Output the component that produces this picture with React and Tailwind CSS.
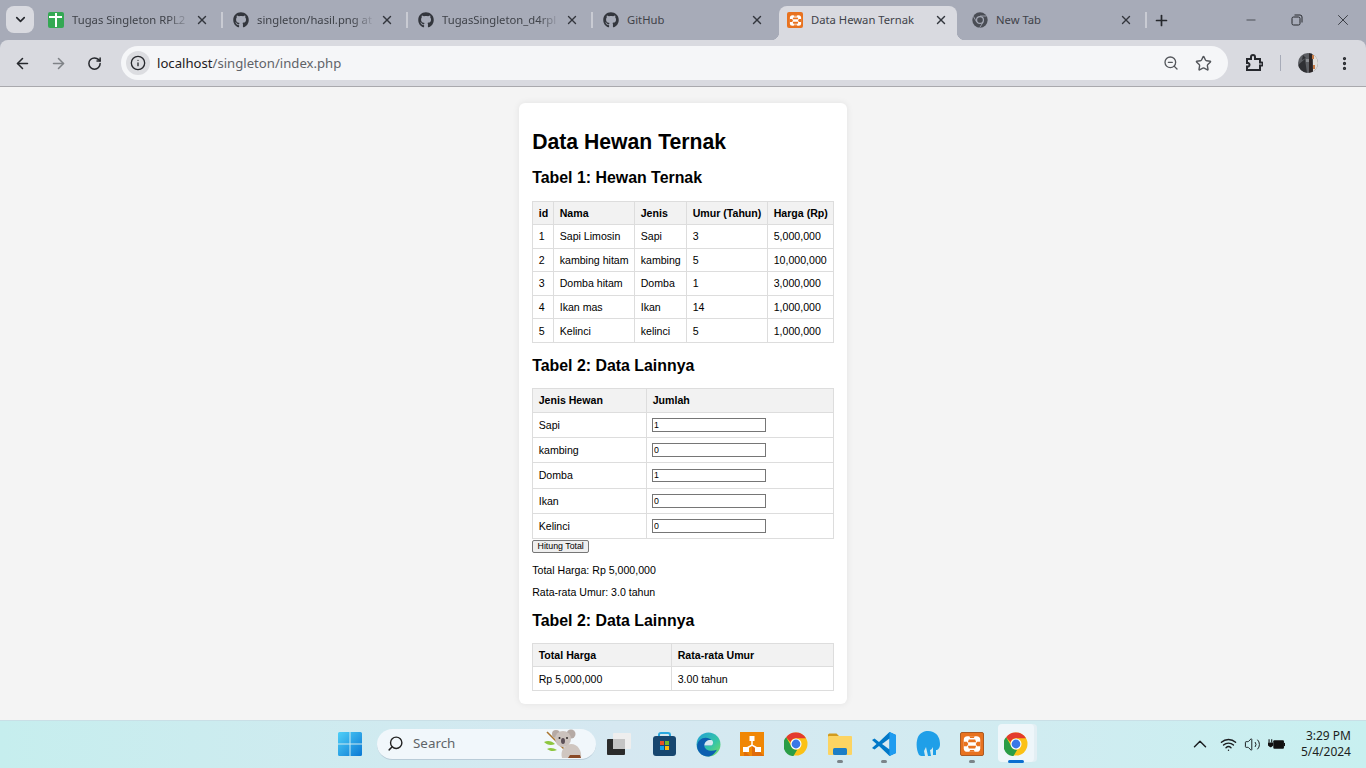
import React from 'react';
import { ArrowLeft, ArrowRight, RotateCw, Info, ZoomOut, Star, MoreVertical, X, Plus, Minus, ChevronDown, ChevronUp, Search, Wifi, Volume2 } from 'lucide-react';
import { FaGithub } from 'react-icons/fa';

const hewan = [
  [1, 'Sapi Limosin', 'Sapi', 3, '5,000,000'],
  [2, 'kambing hitam', 'kambing', 5, '10,000,000'],
  [3, 'Domba hitam', 'Domba', 1, '3,000,000'],
  [4, 'Ikan mas', 'Ikan', 14, '1,000,000'],
  [5, 'Kelinci', 'kelinci', 5, '1,000,000'],
];

const jumlah = [['Sapi', 1], ['kambing', 0], ['Domba', 1], ['Ikan', 0], ['Kelinci', 0]];

const Th = ({ children, className = '' }) => (
  <th className={`whitespace-nowrap border border-[#ddd] bg-[#f2f2f2] px-[5.5px] py-[5.28px] text-left font-bold ${className}`}>{children}</th>
);
const Td = ({ children }) => <td className="whitespace-nowrap border border-[#ddd] px-[5.5px] py-[5.28px] text-left">{children}</td>;

const ChromeLogo = ({ size = 24 }) => (
  <svg width={size} height={size} viewBox="0 0 48 48">
    <circle cx="24" cy="24" r="23" fill="#fbc116" />
    <path d="M24 1a23 23 0 0 1 19.9 11.5H24a11.5 11.5 0 0 0-10.9 7.8L4.200 10.400A23 23 0 0 1 24 1z" fill="#e33b2e" />
    <path d="M4.200 10.400l10 17.300a11.500 11.500 0 0 0 12.200 7.600l-7.700 13.100A23 23 0 0 1 4.200 10.400z" fill="#2a9d46" />
    <circle cx="24" cy="24" r="11" fill="#fff" />
    <circle cx="24" cy="24" r="8.800" fill="#3b78e7" />
  </svg>
);

const GreyChrome = () => (
  <svg width="16" height="16" viewBox="0 0 48 48">
    <circle cx="24" cy="24" r="23" fill="#4a4d55" />
    <circle cx="24" cy="24" r="12" fill="#a7abb8" />
    <circle cx="24" cy="24" r="8.500" fill="#4a4d55" />
    <path d="M24 12h19M14 30L4 13M33 31l-10 16" stroke="#a7abb8" strokeWidth="2.500" />
  </svg>
);

const SheetsIcon = () => (
  <div className="relative h-4 w-4 rounded-[2px] bg-[#34a853]">
    <div className="absolute left-[1px] right-[2px] top-[4px] h-[2px] bg-white" />
    <div className="absolute bottom-[1px] left-[7px] top-[1px] w-[2px] bg-white" />
  </div>
);

const XamppGlyph = ({ size }) => (
  <svg width={size} height={size} viewBox="0 0 24 24">
    <rect x="3" y="3.500" width="18" height="17" rx="4" fill="#fff" />
    <path d="M3 9.500h3.500l1.500 2.500-1.500 2.500H3zM21 9.500h-3.500L16 12l1.500 2.500H21zM9 3.500h6L14 5.500h-4zM9 20.500h6L14 18.500h-4z" fill="#e8721f" />
    <path d="M8.500 7h7l1 3h-9zM7.500 14h9l-1 3h-7z" fill="#e8721f" />
  </svg>
);

const Tab = ({ icon, title, active, separator, fade }) => (
  <div className={`relative flex h-[34px] shrink-0 items-center pb-[6px] pl-2 ${active ? 'mr-[7px] w-[178px] rounded-t-[8px] bg-[#d9dae0]' : 'w-[185px]'}`}>
    <div className="flex w-4 shrink-0 justify-center text-[#33363d]">{icon}</div>
    <div className={`ml-2 w-[123px] overflow-hidden whitespace-nowrap font-['Noto_Sans',sans-serif] text-[11.25px] text-[#3f4249] ${fade ? '[mask-image:linear-gradient(to_right,black_78%,transparent_96%)]' : ''}`}>
      {title}
    </div>
    <X size={14} strokeWidth={2.4} className="shrink-0 text-[#33363d]" />
    {separator && <div className="absolute right-[2px] top-[6px] h-[16px] w-[2px] bg-[#c9cbd3]" />}
  </div>
);

const TaskIcon = ({ children, dot, active }) => (
  <div className="relative flex h-[44px] w-[44px] items-center justify-center">
    {active && <div className="absolute left-[4px] top-[2px] h-[38px] w-[36px] rounded-[4px] bg-[#eef6fa] shadow-[3px_0_0_#e3eff4]" />}
    <div className="relative flex">{children}</div>
    {dot && <div className="absolute bottom-[3px] h-[3px] w-[6px] rounded-full bg-[#7b8489]" />}
    {active && <div className="absolute bottom-[3px] h-[3px] w-[16px] rounded-full bg-[#0a6fd0]" />}
  </div>
);

const Koala = () => (
  <svg width="40" height="30" viewBox="0 0 40 30" className="absolute bottom-0 right-[12px]">
    <path d="M3 3l24 24" stroke="#a9742f" strokeWidth="1.600" />
    <path d="M0 13c4-2 8-1 11 2-4 2-8 1-11-2zM3 20c3-2 7-1 10 1-4 2-7 1-10-1z" fill="#8dc63f" />
    <path d="M18 29c-2-7 2-13 9-14 7 0 11 7 10 14z" fill="#cfc6c0" />
    <path d="M24 29h13l-1-3H26z" fill="#8a4a26" />
    <circle cx="12" cy="5" r="4" fill="#b5aaa5" />
    <circle cx="27" cy="5" r="4.500" fill="#b5aaa5" />
    <circle cx="19" cy="10" r="8" fill="#cbc2bd" />
    <circle cx="15.500" cy="9" r="1" fill="#2f2a2a" />
    <circle cx="23" cy="9" r="1" fill="#2f2a2a" />
    <ellipse cx="19" cy="12" rx="2" ry="3" fill="#5b4f57" />
  </svg>
);

export default function App() {
  return (
    <div className="flex h-[768px] w-[1366px] flex-col overflow-hidden bg-[#f4f4f4] font-['Liberation_Sans',Arial,sans-serif] text-black">
      {/* tab strip */}
      <div className="flex h-10 shrink-0 bg-[#a7abb8]">
        <div className="ml-[6px] mt-[6px] flex h-[27px] w-[28px] items-center justify-center rounded-[8px] bg-[#d9dae0]">
          <ChevronDown size={15} strokeWidth={2.6} className="text-[#26282d]" />
        </div>
        <div className="ml-[6px] mt-[6px] flex">
          <Tab icon={<SheetsIcon />} title="Tugas Singleton RPL2" separator fade />
          <Tab icon={<FaGithub size={16} />} title="singleton/hasil.png at" separator fade />
          <Tab icon={<FaGithub size={16} />} title="TugasSingleton_d4rpl" separator fade />
          <div className="w-[184px] shrink-0"><Tab icon={<FaGithub size={16} />} title="GitHub" /></div>
          <div className="relative">
            <Tab active icon={<div className="flex h-4 w-4 items-center justify-center rounded-[2px] bg-[#e8721f]"><XamppGlyph size={15} /></div>} title="Data Hewan Ternak" />
            <div className="absolute -left-[8px] bottom-0 h-2 w-2 bg-[radial-gradient(circle_at_0_0,transparent_8px,#d9dae0_8.5px)]" />
            <div className="absolute -right-[1px] bottom-0 h-2 w-2 bg-[radial-gradient(circle_at_100%_0,transparent_8px,#d9dae0_8.5px)]" />
          </div>
          <Tab icon={<GreyChrome />} title="New Tab" separator />
        </div>
        <Plus size={17} strokeWidth={2.4} className="ml-[4px] mt-[12px] text-[#26282d]" />
        <div className="ml-auto flex text-[#26282d]">
          <div className="flex w-[46px] items-center justify-center"><Minus size={14} strokeWidth={1.2} /></div>
          <div className="flex w-[46px] items-center justify-center">
            <svg width="12" height="12" viewBox="0 0 12 12" fill="none" stroke="currentColor" strokeWidth="1">
              <rect x="1" y="3" width="8" height="8" rx="1.500" />
              <path d="M3.500 1h5.500A2 2 0 0 1 11 3v5.500" />
            </svg>
          </div>
          <div className="flex w-[46px] items-center justify-center"><X size={18} strokeWidth={1.1} /></div>
        </div>
      </div>

      {/* toolbar */}
      <div className="flex h-[47px] shrink-0 items-start border-b border-[#a9a9ad] bg-[#a7abb8]">
        <div className="flex h-[46px] w-full items-center rounded-t-[8px] bg-[#d9dae0]">
          <ArrowLeft size={17} strokeWidth={2.2} className="ml-[14px] text-[#26282d]" />
          <ArrowRight size={17} strokeWidth={2.2} className="ml-[19px] text-[#7f8287]" />
          <RotateCw size={15} strokeWidth={2.4} className="ml-[20px] text-[#26282d]" />
          <div className="ml-[19px] flex h-[34px] w-[1107px] items-center rounded-full bg-[#f5f6f8] pl-[5px] pr-[16px]">
            <div className="flex h-6 w-6 items-center justify-center rounded-full bg-[#dcdde1]">
              <Info size={16} strokeWidth={2} className="text-[#26282d]" />
            </div>
            <div className="ml-[7px] mt-[1px] font-['Noto_Sans',sans-serif] text-[13.15px] text-[#1f2023]">
              localhost<span className="text-[#5f6368]">/singleton/index.php</span>
            </div>
            <ZoomOut size={16} strokeWidth={2} className="ml-auto text-[#54575c]" />
            <Star size={17} strokeWidth={2} className="ml-[16px] text-[#54575c]" />
          </div>
          <svg width="18" height="18" viewBox="0 0 18 18" fill="none" stroke="#26282d" strokeWidth="2" className="ml-[17px]">
            <path d="M2 5h4V3a2 2 0 0 1 4 0v2h5v3.500h1.500a1.500 1.500 0 0 1 0 3H15V16H2v-3.500h1.500a2 2 0 0 0 0-3.500H2z" />
          </svg>
          <div className="ml-[17px] h-4 w-[1px] bg-[#a7abb8]" />
          <svg width="20" height="20" viewBox="0 0 20 20" className="ml-[17px]">
            <defs><clipPath id="ava"><circle cx="10" cy="10" r="10" /></clipPath></defs>
            <g clipPath="url(#ava)">
              <rect width="20" height="20" fill="#5c5e63" />
              <path d="M0 12l7-6 2 14H2zM5 2l3 3-4 2z" fill="#2f3034" />
              <rect x="8" y="6" width="3" height="3" fill="#8d8f94" />
              <path d="M11 0h3l1 20h-4z" fill="#2a2526" />
              <path d="M15 0h5v20h-5z" fill="#e2dfdb" />
              <rect x="14" y="2" width="2" height="4" fill="#c87a45" />
              <rect x="15" y="12" width="2" height="4" fill="#c87a45" />
            </g>
          </svg>
          <MoreVertical size={17} strokeWidth={2.6} className="ml-[18px] text-[#26282d]" />
        </div>
      </div>

      {/* page */}
      <div className="flex flex-1 justify-center pt-4 text-[10.6px] leading-[normal]">
        <div className="h-[601px] w-[328px] rounded-[6px] bg-white p-[13.2px] shadow-[0_0_7px_rgba(0,0,0,0.08)]">
          <h1 className="mb-[15.15px] mt-[14.15px] text-[21.2px] font-bold">Data Hewan Ternak</h1>
          <h2 className="my-[13.15px] text-[15.9px] font-bold">Tabel 1: Hewan Ternak</h2>
          <table className="w-[302px] table-fixed border-collapse">
            <thead>
              <tr>
                <Th className="w-[21px]">id</Th>
                <Th className="w-[81px]">Nama</Th>
                <Th className="w-[52px]">Jenis</Th>
                <Th className="w-[81px]">Umur (Tahun)</Th>
                <Th>Harga (Rp)</Th>
              </tr>
            </thead>
            <tbody>
              {hewan.map((row) => (
                <tr key={row[0]}>
                  {row.map((cell, i) => <Td key={i}>{cell}</Td>)}
                </tr>
              ))}
            </tbody>
          </table>

          <h2 className="mb-[13.15px] mt-[14.15px] text-[15.9px] font-bold">Tabel 2: Data Lainnya</h2>
          <table className="w-[302px] table-fixed border-collapse">
            <thead>
              <tr>
                <Th className="w-[114px]">Jenis Hewan</Th>
                <Th>Jumlah</Th>
              </tr>
            </thead>
            <tbody>
              {jumlah.map(([nama, n]) => (
                <tr key={nama}>
                  <Td>{nama}</Td>
                  <Td>
                    <input
                      type="number"
                      defaultValue={n}
                      className="-ml-[0.6px] block h-[13.8px] w-[114px] border border-[#767676] px-[1px] font-['Liberation_Sans',sans-serif] text-[8.8px] text-black"
                    />
                  </Td>
                </tr>
              ))}
            </tbody>
          </table>
          <button className="mt-[0.5px] block h-[13px] w-[57px] rounded-[2px] border border-[#767676] bg-[#efefef] text-center text-[8.8px] leading-[10px]">
            Hitung Total
          </button>
          <p className="mb-[10.56px] mt-[11.2px]">Total Harga: Rp 5,000,000</p>
          <p className="my-[9.56px]">Rata-rata Umur: 3.0 tahun</p>

          <h2 className="my-[13.15px] text-[15.9px] font-bold">Tabel 2: Data Lainnya</h2>
          <table className="w-[302px] table-fixed border-collapse">
            <thead>
              <tr>
                <Th className="w-[139px]">Total Harga</Th>
                <Th>Rata-rata Umur</Th>
              </tr>
            </thead>
            <tbody>
              <tr>
                <Td>Rp 5,000,000</Td>
                <Td>3.00 tahun</Td>
              </tr>
            </tbody>
          </table>
        </div>
      </div>

      {/* taskbar */}
      <div className="flex h-[48px] shrink-0 items-center border-t border-[#c9dfe6] bg-[linear-gradient(90deg,#c6eeee,#d6e8f1_45%,#d2ebf1_70%,#c8f0f0)] pb-[1px] pl-[328px]">
        <div className="flex w-[44px] justify-center">
          <svg width="24" height="24" viewBox="0 0 24 24">
            <defs>
              <linearGradient id="win" x1="0" y1="0" x2="1" y2="1">
                <stop offset="0" stopColor="#4fd0f8" />
                <stop offset="1" stopColor="#0a78d4" />
              </linearGradient>
            </defs>
            <path d="M0 1.500A1.500 1.500 0 0 1 1.500 0h10v11.500H0zM12.500 0h10A1.500 1.500 0 0 1 24 1.500v10H12.500zM0 12.500h11.500V24h-10A1.500 1.500 0 0 1 0 22.500zM12.500 12.500H24v10a1.500 1.500 0 0 1-1.500 1.500h-10z" fill="url(#win)" />
          </svg>
        </div>
        <div className="relative ml-[5px] flex h-[31px] w-[219px] items-center rounded-full border-b border-[#b9ccd8] bg-[#f1f7fb] pl-[10px]">
          <Search size={17} strokeWidth={2} className="-scale-x-100 text-[#222]" />
          <span className="ml-[9px] font-['Noto_Sans',sans-serif] text-[13.4px] text-[#5f6468]">Search</span>
          <Koala />
        </div>
        <div className="ml-[2px] flex items-center">
          <TaskIcon>
            <div className="relative -ml-[3px] h-[22px] w-[24px]">
              <div className="absolute bottom-0 left-0 h-4 w-[18px] rounded-[1px] bg-[#2b2b2b]" />
              <div className="absolute right-0 top-0 h-4 w-[18px] rounded-[1px] bg-[#eeeeee]" />
              <div className="absolute left-[6px] top-[6px] h-[10px] w-[12px] bg-[#c4c4c4]" />
            </div>
          </TaskIcon>
          <TaskIcon>
            <div className="relative h-[24px] w-[23px]">
              <div className="absolute left-[5px] top-0 h-[7px] w-[13px] rounded-t-[3px] border-2 border-b-0 border-[#29a8e0]" />
              <div className="absolute bottom-0 h-[20px] w-[23px] rounded-[3px] bg-[#17466f]" />
              <div className="absolute left-[7px] top-[9px] grid grid-cols-2 gap-[1px]">
                <div className="h-[4px] w-[4px] bg-[#e84f25]" />
                <div className="h-[4px] w-[4px] bg-[#72b82b]" />
                <div className="h-[4px] w-[4px] bg-[#12a3e8]" />
                <div className="h-[4px] w-[4px] bg-[#fbbb0c]" />
              </div>
            </div>
          </TaskIcon>
          <TaskIcon>
            <svg width="25" height="25" viewBox="0 0 48 48">
              <defs>
                <linearGradient id="edge" x1="0" y1="0" x2="1" y2="1">
                  <stop offset="0" stopColor="#1f9fd8" />
                  <stop offset="0.6" stopColor="#37c6a5" />
                  <stop offset="1" stopColor="#7fdc5a" />
                </linearGradient>
              </defs>
              <circle cx="24" cy="24" r="23" fill="url(#edge)" />
              <path d="M2 27C3 14 16 8 26 13c7 4 7 11 3 13H16c0 9 13 13 24 8-4 8-11 13-17 13C11 47 2 38 2 27z" fill="#0c5fb0" />
              <path d="M16 26c0-8 8-12 15-10 3 3 2 9-2 10z" fill="#d6e8f1" />
            </svg>
          </TaskIcon>
          <TaskIcon>
            <svg width="24" height="24" viewBox="0 0 24 24">
              <rect width="24" height="24" fill="#f08705" />
              <path d="M12 12l12 12H12zM4 18l6 6H4z" fill="#df6c0c" />
              <path d="M12 8v5M7 16l5-3 5 3" stroke="#fff" strokeWidth="1.500" fill="none" />
              <rect x="9.500" y="4" width="5" height="5" fill="#fff" />
              <rect x="3" y="15" width="6" height="5" fill="#fff" />
              <rect x="15" y="15" width="6" height="5" fill="#fff" />
            </svg>
          </TaskIcon>
          <TaskIcon><ChromeLogo /></TaskIcon>
          <TaskIcon dot>
            <svg width="24" height="24" viewBox="0 0 24 24">
              <path d="M0 3a1.500 1.500 0 0 1 1.500-1.500h7L12 5H0z" fill="#d29b1e" />
              <rect y="4" width="24" height="19" rx="1" fill="#fcd462" />
              <rect x="5" y="16" width="14" height="7" rx="1.500" fill="#1c7ec6" />
            </svg>
          </TaskIcon>
          <TaskIcon dot>
            <svg width="24" height="24" viewBox="0 0 24 24">
              <path d="M17.500 0L24 3v18l-6.500 3L7 14l-4.500 3.500L0 16l4.500-4L0 8l2.500-1.500L7 10z" fill="#0078c8" />
              <path d="M17.500 6.500L10 12l7.500 5.500z" fill="#d6e8f1" />
              <path d="M17.500 0L24 3v18l-6.500 3z" fill="#1f9cf0" />
            </svg>
          </TaskIcon>
          <TaskIcon>
            <svg width="24" height="26" viewBox="0 0 24 26">
              <path d="M3 24C0 18 0 11 2 6c3-6 10-7 15-5 5 2 7 7 7 12 0 4-2 6-4 6v5h-3v-8c-1 2-2 3-3 3l1 6h-3l-2-9-2 4 1 5H5z" fill="#1f9fe8" />
            </svg>
          </TaskIcon>
          <TaskIcon dot>
            <div className="flex h-6 w-6 items-center justify-center rounded-[2px] border border-[#a95a24] bg-[#e8721f]">
              <XamppGlyph size={22} />
            </div>
          </TaskIcon>
          <TaskIcon active><ChromeLogo /></TaskIcon>
        </div>

        <div className="ml-auto flex items-center text-[#1c1f22]">
          <ChevronUp size={22} strokeWidth={1.6} />
          <Wifi size={17} strokeWidth={2} className="ml-[9px]" />
          <Volume2 size={17} strokeWidth={1.4} className="ml-[7px]" />
          <svg width="17" height="13" viewBox="0 0 16 12" className="ml-[7px]">
            <path d="M1 1v3M3.500 1v3" stroke="#111" strokeWidth="1" />
            <path d="M0 4h5v3L3 8.500H2L0 7z" fill="#111" />
            <rect x="5" y="2" width="10" height="8" rx="1" fill="#111" />
            <rect x="15" y="4.500" width="1" height="3" fill="#111" />
          </svg>
          <div className="ml-[16px] mr-[15px] text-right font-['Noto_Sans',sans-serif] text-[12px] leading-[16px]">
            <div>3:29 PM</div>
            <div>5/4/2024</div>
          </div>
        </div>
      </div>
    </div>
  );
}
